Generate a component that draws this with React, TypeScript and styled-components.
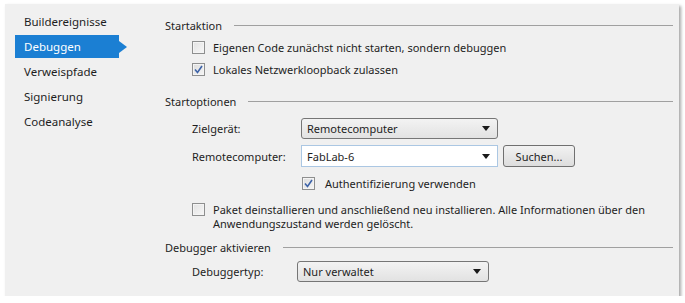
import React from "react";
import styled, { createGlobalStyle } from "styled-components";

const Global = createGlobalStyle`
  html, body { margin: 0; padding: 0; background: #ffffff; }
  body { font-family: "Noto Sans", "Open Sans", sans-serif; font-size: 11px; color: #1e1e1e; }
`;

const Panel = styled.div`
  margin: 4px 0 0 5px;
  width: 674px;
  height: 292px;
  background: #f0f0f0;
  box-shadow: 2px 2px 3px rgba(0, 0, 0, 0.35);
  display: flex;
`;

const Sidebar = styled.nav`
  width: 150px;
  padding: 6px 0 0 10px;
  display: flex;
  flex-direction: column;
  gap: 2px;
`;

const NavItem = styled.div<{ $active?: boolean }>`
  position: relative;
  width: 104px;
  height: 23px;
  box-sizing: border-box;
  padding-left: 9px;
  display: flex;
  align-items: center;
  font-size: 11.5px;
  background: ${(p) => (p.$active ? "#1b7fd3" : "transparent")};
  color: ${(p) => (p.$active ? "#ffffff" : "#1e1e1e")};
  &::after {
    content: "";
    display: ${(p) => (p.$active ? "block" : "none")};
    position: absolute;
    right: -8px;
    top: 50%;
    margin-top: -6px;
    border-left: 8px solid #1b7fd3;
    border-top: 6px solid transparent;
    border-bottom: 6px solid transparent;
  }
`;

const Content = styled.div`
  flex: 1;
  padding: 13px 6px 0 0;
  display: flex;
  flex-direction: column;
`;

const SectionHeader = styled.div<{ $mt?: number }>`
  height: 16px;
  margin-top: ${(p) => p.$mt ?? 0}px;
  display: flex;
  align-items: center;
  gap: 12px;
  &::after {
    content: "";
    flex: 1;
    height: 1px;
    background: #a0a0a0;
    margin-top: 1px;
  }
`;

const CheckRow = styled.label<{ $mt?: number; $indent?: number; $gap?: number }>`
  display: flex;
  align-items: flex-start;
  gap: ${(p) => p.$gap ?? 8}px;
  margin-top: ${(p) => p.$mt ?? 0}px;
  padding-left: ${(p) => p.$indent ?? 27}px;
  min-height: 22px;
  line-height: 14px;
  box-sizing: border-box;
  padding-top: 4px;
`;

const Box = styled.span<{ $checked?: boolean }>`
  flex: none;
  width: 13px;
  height: 13px;
  box-sizing: border-box;
  border: 1px solid #8e8f8f;
  background: ${(p) =>
    p.$checked
      ? "linear-gradient(135deg, #dcdcdc 0%, #f6f6f6 100%)"
      : "linear-gradient(135deg, #e2e2e2 0%, #f7f7f7 100%)"};
  box-shadow: inset 0 0 0 1px #f4f4f4;
  display: flex;
  align-items: center;
  justify-content: center;
`;

const FormRow = styled.div<{ $mt?: number }>`
  display: flex;
  align-items: center;
  margin-top: ${(p) => p.$mt ?? 0}px;
  padding-left: 27px;
`;

const Label = styled.span<{ $width: number }>`
  width: ${(p) => p.$width}px;
  flex: none;
`;

const Select = styled.div<{ $width: number }>`
  width: ${(p) => p.$width}px;
  height: 21px;
  box-sizing: border-box;
  border: 1px solid #767676;
  border-radius: 3px;
  background: linear-gradient(#f3f3f3, #e2e2e2);
  display: flex;
  align-items: center;
  justify-content: space-between;
  padding: 0 7px 0 5px;
`;

const Input = styled.div<{ $width: number }>`
  width: ${(p) => p.$width}px;
  height: 22px;
  box-sizing: border-box;
  border: 1px solid #abc7e3;
  background: #ffffff;
  display: flex;
  align-items: center;
  justify-content: space-between;
  padding: 0 7px 0 5px;
`;

const Button = styled.div`
  width: 72px;
  height: 22px;
  box-sizing: border-box;
  margin-left: 5px;
  border: 1px solid #707070;
  border-radius: 3px;
  background: linear-gradient(#f2f2f2, #dddddd);
  display: flex;
  align-items: center;
  justify-content: center;
`;

const Arrow = () => (
  <svg width="8" height="5" viewBox="0 0 8 5">
    <path d="M0 0 H8 L4 5 Z" fill="#1a1a1a" />
  </svg>
);

const Check = () => (
  <svg width="9" height="9" viewBox="0 0 9 9">
    <path d="M1 4.5 L3.5 7.5 L8 1" fill="none" stroke="#3d63a8" strokeWidth="1.6" />
  </svg>
);

export default function App() {
  return (
    <>
      <Global />
      <Panel>
        <Sidebar>
          <NavItem>Buildereignisse</NavItem>
          <NavItem $active>Debuggen</NavItem>
          <NavItem>Verweispfade</NavItem>
          <NavItem>Signierung</NavItem>
          <NavItem>Codeanalyse</NavItem>
        </Sidebar>
        <Content>
          <SectionHeader>Startaktion</SectionHeader>
          <CheckRow $mt={4}>
            <Box />
            <span>Eigenen Code zunächst nicht starten, sondern debuggen</span>
          </CheckRow>
          <CheckRow>
            <Box $checked>
              <Check />
            </Box>
            <span>Lokales Netzwerkloopback zulassen</span>
          </CheckRow>
          <SectionHeader $mt={12}>Startoptionen</SectionHeader>
          <FormRow $mt={9}>
            <Label $width={109}>Zielgerät:</Label>
            <Select $width={197}>
              <span>Remotecomputer</span>
              <Arrow />
            </Select>
          </FormRow>
          <FormRow $mt={6}>
            <Label $width={109}>Remotecomputer:</Label>
            <Input $width={197}>
              <span>FabLab-6</span>
              <Arrow />
            </Input>
            <Button>Suchen...</Button>
          </FormRow>
          <CheckRow $mt={6} $indent={137} $gap={10}>
            <Box $checked>
              <Check />
            </Box>
            <span>Authentifizierung verwenden</span>
          </CheckRow>
          <CheckRow $mt={4}>
            <Box />
            <span>
              Paket deinstallieren und anschließend neu installieren. Alle Informationen über den
              <br />
              Anwendungszustand werden gelöscht.
            </span>
          </CheckRow>
          <SectionHeader $mt={8}>Debugger aktivieren</SectionHeader>
          <FormRow $mt={6}>
            <Label $width={105}>Debuggertyp:</Label>
            <Select $width={192}>
              <span>Nur verwaltet</span>
              <Arrow />
            </Select>
          </FormRow>
        </Content>
      </Panel>
    </>
  );
}
